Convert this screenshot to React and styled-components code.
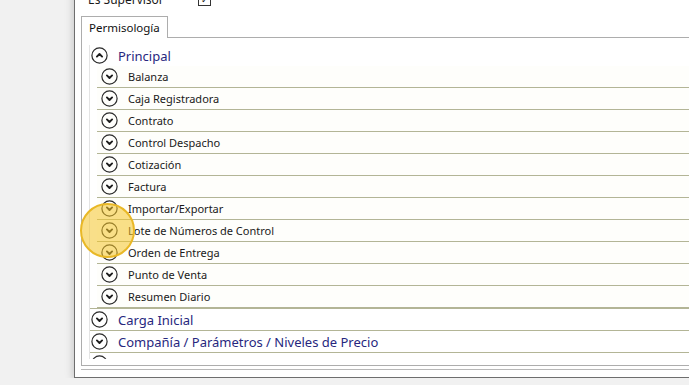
import React from 'react'
import styled, { createGlobalStyle } from 'styled-components'

const GlobalStyle = createGlobalStyle`
    html, body {
        margin: 0;
        padding: 0;
        background: #f1f1f1;
        overflow: hidden;
    }
    body {
        font-family: "Noto Sans", "Open Sans", sans-serif;
    }
`

const groups = [
    {
        title: 'Principal',
        open: true,
        items: [
            'Balanza',
            'Caja Registradora',
            'Contrato',
            'Control Despacho',
            'Cotización',
            'Factura',
            'Importar/Exportar',
            'Lote de Números de Control',
            'Orden de Entrega',
            'Punto de Venta',
            'Resumen Diario',
        ],
    },
    { title: 'Carga Inicial' },
    { title: 'Compañía / Parámetros / Niveles de Precio' },
    { title: 'Contabilidad' },
]

function Chevron({ up }) {
    return (
        <Icon viewBox="0 0 17 17">
            <circle cx="8.5" cy="8.5" r="7.6" fill="none" stroke="#2a2a2a" strokeWidth="1.2" />
            <path
                d={up ? 'M5.9 9.6 L8.5 7 L11.1 9.6' : 'M5.9 7.4 L8.5 10 L11.1 7.4'}
                fill="none"
                stroke="#1e1e1e"
                strokeWidth="1.9"
                strokeLinecap="round"
                strokeLinejoin="round"
            />
        </Icon>
    )
}

function App() {
    return (
        <>
            <GlobalStyle />
            <Window>
                <SupervisorRow>
                    <FieldLabel>Es Supervisor</FieldLabel>
                    <CheckBox>✓</CheckBox>
                </SupervisorRow>
                <Body>
                    <TabStrip>
                        <Tab>Permisología</Tab>
                    </TabStrip>
                    <Panel>
                        <Tree>
                            {groups.map((g) => (
                                <Group key={g.title}>
                                    <HeaderRow>
                                        <Chevron up={g.open} />
                                        <HeaderText>{g.title}</HeaderText>
                                    </HeaderRow>
                                    {g.open &&
                                        g.items.map((item) => (
                                            <ItemRow key={item}>
                                                <Chevron />
                                                <ItemText>{item}</ItemText>
                                            </ItemRow>
                                        ))}
                                </Group>
                            ))}
                        </Tree>
                    </Panel>
                </Body>
            </Window>
            <Cursor />
        </>
    )
}

export default App

const Window = styled.div`
    margin: -12px 0 0 74px;
    height: 390px;
    background: #ffffff;
    border-left: 1px solid #6e6e6e;
    border-bottom: 1px solid #6e6e6e;
    box-shadow: 0 2px 9px rgba(0, 0, 0, 0.22);
    display: flex;
    flex-direction: column;
    padding: 0 0 7px 6px;
    box-sizing: border-box;
`
const SupervisorRow = styled.div`
    height: 22px;
    display: flex;
    align-items: center;
    flex-shrink: 0;
`
const FieldLabel = styled.span`
    width: 110px;
    padding-left: 7px;
    font-size: 12px;
    color: #1a1a1a;
`
const CheckBox = styled.span`
    width: 11px;
    height: 11px;
    border: 1px solid #333;
    font-size: 9px;
    line-height: 11px;
    text-align: center;
    color: #222;
`
const Body = styled.div`
    flex: 1;
    display: flex;
    flex-direction: column;
    min-height: 0;
    margin-top: 6px;
    padding-bottom: 3px;
    border-bottom: 1px solid #b8b8b8;
`
const TabStrip = styled.div`
    display: flex;
    flex-shrink: 0;
`
const Tab = styled.div`
    height: 21px;
    padding: 0 7px;
    border: 1px solid #adadad;
    border-bottom: none;
    background: #fff;
    font-size: 11.5px;
    line-height: 21px;
    color: #111;
    margin-bottom: -1px;
    position: relative;
`
const Panel = styled.div`
    flex: 1;
    border: 1px solid #adadad;
    border-right: none;
    padding: 7px 0 6px 7px;
    display: flex;
    flex-direction: column;
    min-height: 0;
`
const Tree = styled.div`
    flex: 1;
    overflow: hidden;
    border-left: 1px solid #e4e4e4;
`
const Group = styled.div`
    border-bottom: 1px solid #b3b596;
`
const HeaderRow = styled.div`
    height: 21px;
    display: flex;
    align-items: center;
    gap: 10px;
    padding-left: 1px;
`
const HeaderText = styled.span`
    font-size: 13px;
    color: #27277e;
    white-space: nowrap;
    margin-top: 1px;
`
const ItemRow = styled.div`
    height: 21px;
    margin-left: 7px;
    padding-left: 4px;
    display: flex;
    align-items: center;
    gap: 10px;
    border-bottom: 1px solid #b3b596;
    background: #fefefb;
`
const ItemText = styled.span`
    font-size: 11px;
    color: #1a1a1a;
    white-space: nowrap;
`
const Icon = styled.svg`
    width: 17px;
    height: 17px;
    flex-shrink: 0;
`
const Cursor = styled.div`
    position: absolute;
    left: 80px;
    top: 203px;
    width: 51px;
    height: 51px;
    border-radius: 50%;
    border: 2px solid #e9b826;
    background: rgba(244, 196, 40, 0.55);
    pointer-events: none;
`
